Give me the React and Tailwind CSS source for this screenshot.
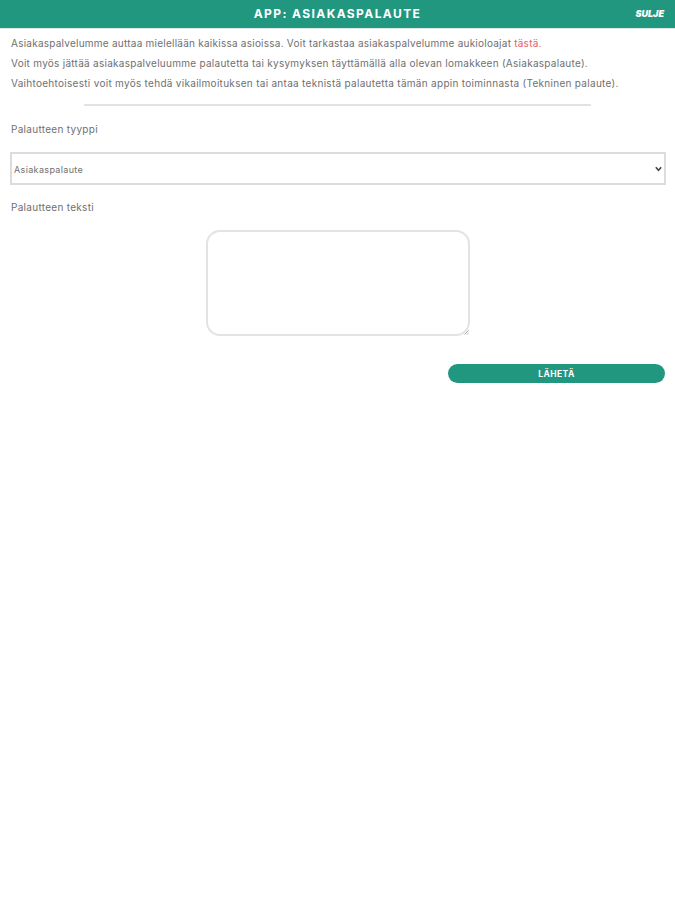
import React from 'react';

const App = () => {
   return (
      <div className="min-h-[900px] w-full bg-white font-['Inter',sans-serif] text-[10px] tracking-[0.29px] text-[#707070]">
         {/* Header */}
         <div className="flex h-[29px] items-center border-b border-[#dcebe7] bg-[#219780] px-[11px] text-white">
            <div className="w-[36px]" />
            <h1 className="flex-1 text-center text-[12px] font-bold tracking-[1.4px]">APP: ASIAKASPALAUTE</h1>
            <span className="w-[36px] text-right text-[9px] font-black italic tracking-normal">SULJE</span>
         </div>

         <div className="px-[11px] pt-[4px]">
            <p className="h-[20px] leading-[20px] tracking-[0.24px]">
               Asiakaspalvelumme auttaa mielellään kaikissa asioissa. Voit tarkastaa asiakaspalvelumme aukioloajat <span className="text-[#e4606d]">tästä.</span>
            </p>
            <p className="h-[20px] leading-[20px] tracking-[0.27px]">
               Voit myös jättää asiakaspalveluumme palautetta tai kysymyksen täyttämällä alla olevan lomakkeen (Asiakaspalaute).
            </p>
            <p className="h-[20px] leading-[20px] whitespace-nowrap">
               Vaihtoehtoisesti voit myös tehdä vikailmoituksen tai antaa teknistä palautetta tämän appin toiminnasta (Tekninen palaute).
            </p>

            <div className="mx-auto mt-[11px] h-[2px] w-[507px] bg-[#e2e2e2]" />

            <div className="mt-[16px] leading-[14px]">Palautteen tyyppi</div>

            <div className="relative mt-[16px] -ml-px h-[33px] w-[656px]">
               <select className="block h-full w-full appearance-none border-2 border-[#dcdcdc] bg-white pl-[2px] pt-[2px] text-[9px] tracking-[0.35px]">
                  <option>Asiakaspalaute</option>
               </select>
               <svg className="pointer-events-none absolute right-[4px] top-[14px]" width="7" height="6" viewBox="0 0 7 6" fill="none" stroke="#444" strokeWidth="1.6">
                  <path d="M0.8 1.2 L3.5 4.2 L6.2 1.2" />
               </svg>
            </div>

            <div className="mt-[15px] leading-[14px]">Palautteen teksti</div>

            <div className="mt-[16px] flex justify-center">
               <div className="relative">
                  <textarea className="block h-[106px] w-[264px] resize-none rounded-[14px] border-2 border-[#e3e3e3]" />
                  <svg className="pointer-events-none absolute bottom-[1px] right-[1px]" width="5" height="5" viewBox="0 0 5 5" fill="none" stroke="#aaa" strokeWidth="1">
                     <path d="M0.5 4.5 L4.5 0.5 M3 4.5 L4.5 3" />
                  </svg>
               </div>
            </div>

            <div className="mt-[28px] flex justify-end">
               <button className="-mr-[1px] h-[19px] w-[217px] rounded-full bg-[#219780] pt-[2px] text-[8.5px] font-bold tracking-[0.4px] text-white">LÄHETÄ</button>
            </div>
         </div>
      </div>
   );
};

export default App;
